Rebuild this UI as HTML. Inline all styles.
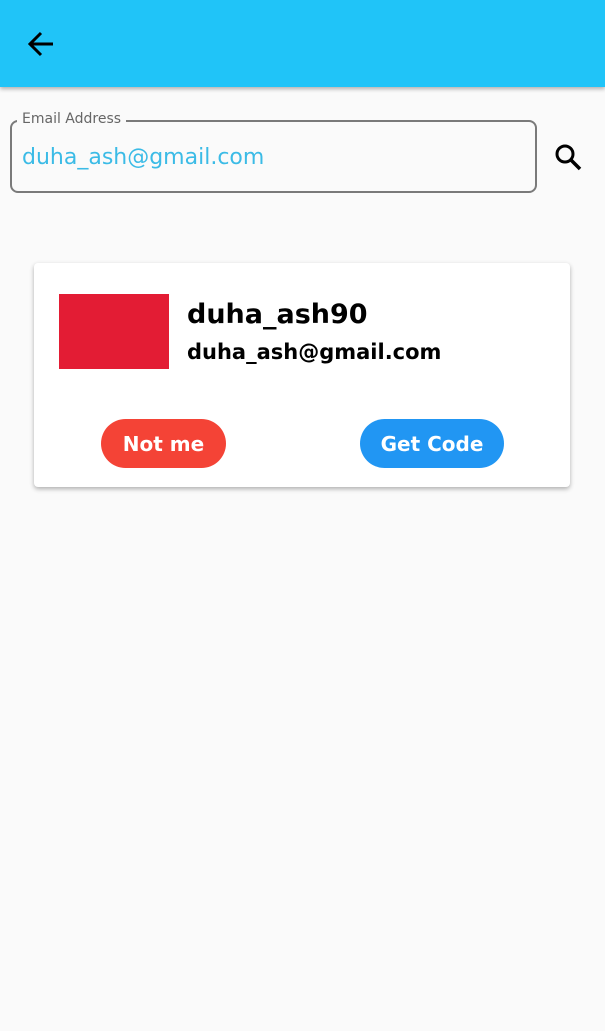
<!DOCTYPE html>
<html><head><style>
body{margin:0;width:605px;height:1031px;background:#fafafa;font-family:"DejaVu Sans","Liberation Sans",sans-serif;position:relative;overflow:hidden}
.bar{position:absolute;left:0;top:0;width:605px;height:87px;background:#20c4f8;box-shadow:0 2px 4px rgba(0,0,0,.3)}
.field{position:absolute;left:10px;top:120px;width:527px;height:73px;border:2px solid #7a7a7a;border-radius:8px;box-sizing:border-box}
.lbl{position:absolute;left:17px;top:111px;font-size:14px;color:#666;background:#fafafa;padding:0 5px}
.val{position:absolute;left:22px;top:145px;font-size:22px;color:#3bbbe6}
.card{position:absolute;left:34px;top:263px;width:536px;height:224px;background:#fff;border-radius:4px;box-shadow:0 2px 5px rgba(0,0,0,.3)}
.red{position:absolute;left:25px;top:31px;width:110px;height:75px;background:#e31c34}
.n{position:absolute;left:153px;top:36px;font-size:27px;font-weight:bold}
.e{position:absolute;left:153px;top:77px;font-size:21px;font-weight:bold}
.btn{position:absolute;top:156px;height:49px;border-radius:25px;color:#fff;font-size:20px;font-weight:bold;line-height:51px;text-align:center}
</style></head><body>
<div class="bar"><svg style="position:absolute;left:26px;top:30px" width="30" height="28" viewBox="0 0 30 28"><path d="M27 14H4M15 3L4 14l11 11" stroke="#000" stroke-width="3" fill="none"/></svg></div>
<div class="field"></div><div class="lbl">Email Address</div><div class="val">duha_ash@gmail.com</div>
<svg style="position:absolute;left:554px;top:142px" width="30" height="30" viewBox="0 0 30 30"><circle cx="11" cy="12" r="8" stroke="#000" stroke-width="3" fill="none"/><path d="M17 18l9 9" stroke="#000" stroke-width="3.5"/></svg>
<div class="card"><div class="red"></div><div class="n">duha_ash90</div><div class="e">duha_ash@gmail.com</div>
<div class="btn" style="left:67px;width:125px;background:#f44336">Not me</div>
<div class="btn" style="left:326px;width:144px;background:#2196f3">Get Code</div></div>
</body></html>
